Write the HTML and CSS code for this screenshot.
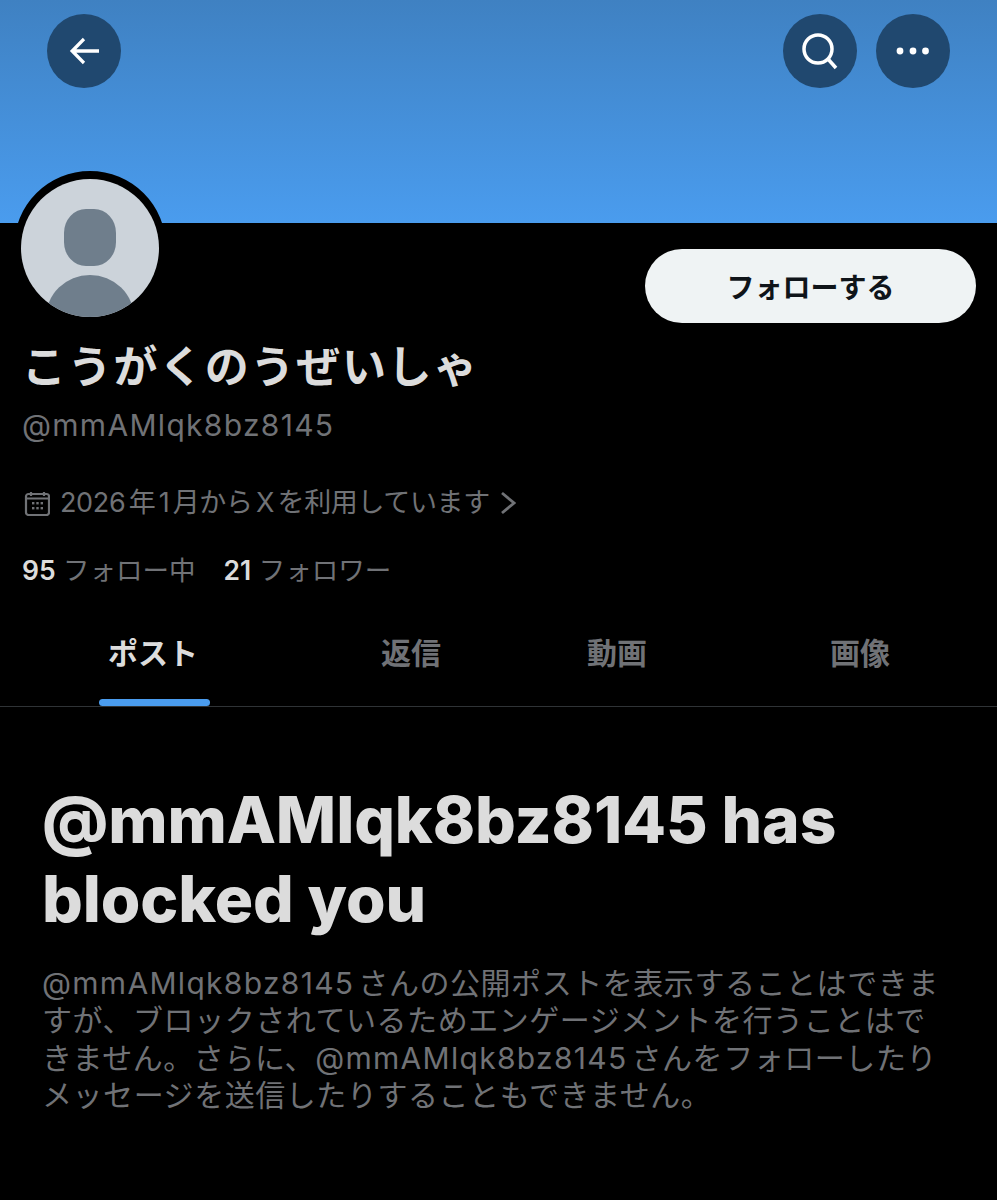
FILE: index.html
```html
<!DOCTYPE html>
<html lang="ja">
<head>
    <meta charset="UTF-8">
    <meta name="viewport" content="width=device-width, initial-scale=1.0">
    <title>@mmAMlqk8bz8145</title>
    <link rel="stylesheet" href="styles.css">
</head>
<body>

<div class="banner">
    <button class="round-btn">
        <svg width="36" height="36" viewBox="0 0 36 36"><path d="M33 18H4M17 6 4.5 18 17 30" transform="translate(2 0) scale(.94 1)"/></svg>
    </button>
    <div class="banner-right">
        <button class="round-btn">
            <svg width="40" height="40" viewBox="0 0 40 40"><circle cx="18" cy="18" r="14"/><path d="M28 28 36 37"/></svg>
        </button>
        <button class="round-btn">
            <svg class="dots" width="34" height="10" viewBox="0 0 34 10"><circle cx="4" cy="5" r="3.400"/><circle cx="17" cy="5" r="3.400"/><circle cx="29.500" cy="5" r="3.400"/></svg>
        </button>
    </div>
</div>

<div class="profile">
    <div class="avatar-row">
        <div class="avatar">
            <svg width="138" height="138" viewBox="0 0 138 138">
                <rect x="43" y="30" width="52" height="57" rx="22" ry="24"/>
                <ellipse cx="69" cy="139" rx="44" ry="43"/>
            </svg>
        </div>
        <button class="follow-btn">フォローする</button>
    </div>
    <h1 class="name">こうがくのうぜいしゃ</h1>
    <div class="handle">@mmAMlqk8bz8145</div>
    <div class="joined">
        <svg width="26" height="26" viewBox="0 0 26 26">
            <rect x="2" y="4" width="23" height="21" rx="2.500"/>
            <path d="M7 2v4M20 2v4M2 8.500h23"/>
            <g class="cal-dots"><rect x="8" y="12" width="2.400" height="2.400"/><rect x="12.300" y="12" width="2.400" height="2.400"/><rect x="16.600" y="12" width="2.400" height="2.400"/><rect x="8" y="17" width="2.400" height="2.400"/><rect x="12.300" y="17" width="2.400" height="2.400"/><rect x="16.600" y="17" width="2.400" height="2.400"/></g>
        </svg>
        <span>2026年1月からXを利用しています</span>
        <svg class="chev" width="16" height="24" viewBox="0 0 16 24"><path d="M2 2 14 12 2 22"/></svg>
    </div>
    <div class="counts">
        <span><b>95</b> フォロー中</span>
        <span><b>21</b> フォロワー</span>
    </div>
</div>

<div class="tabs">
    <div class="tab active">ポスト<i></i></div>
    <div class="tab">返信</div>
    <div class="tab">動画</div>
    <div class="tab">画像</div>
</div>

<div class="blocked">
    <h2>@mmAMlqk8bz8145 has blocked you</h2>
    <p><span class="at">@mmAMlqk8bz8145</span> さんの公開ポストを表示することはできま<br>すが、ブロックされているためエンゲージメントを行うことはで<br>きません。さらに、<span class="at">@mmAMlqk8bz8145</span> さんをフォローしたり<br>メッセージを送信したりすることもできません。</p>
</div>

</body>
</html>
```

FILE: styles.css
```css
* {
    box-sizing: border-box;
}

body {
    margin: 0;
    height: 1200px;
    overflow: hidden;
    background: #000;
    font-family: Inter, "Noto Sans CJK JP", sans-serif;
    color: #707276;
}

.banner {
    height: 223px;
    padding: 14px 47px;
    display: flex;
    justify-content: space-between;
    align-items: flex-start;
    background: linear-gradient(to bottom, #3f81c2, #4a9cee);
}

.banner-right {
    display: flex;
    gap: 19px;
}

.round-btn {
    width: 74px;
    height: 74px;
    padding: 0;
    border: none;
    border-radius: 50%;
    background: #20486f;
    display: flex;
    align-items: center;
    justify-content: center;
}

.round-btn svg {
    fill: none;
    stroke: #fff;
    stroke-width: 3.500;
}

.round-btn svg.dots {
    fill: #fff;
    stroke: none;
}

.profile {
    padding: 0 21px 0 22px;
}

.avatar-row {
    display: flex;
    justify-content: space-between;
    align-items: flex-start;
}

.avatar {
    width: 152px;
    height: 152px;
    margin: -52px 0 0 -8px;
    border: 7px solid #000;
    border-top-width: 8px;
    border-radius: 50%;
    background: #000;
    position: relative;
}

.avatar svg {
    display: block;
    border-radius: 50%;
    background: #ccd3da;
    fill: #6f7e8c;
}

.follow-btn {
    width: 331px;
    height: 74px;
    margin-top: 26px;
    padding-bottom: 2px;
    border: none;
    border-radius: 37px;
    background: #eff3f4;
    color: #0f1419;
    font-family: inherit;
    font-size: 28px;
    font-weight: 700;
}

.name {
    margin: 16px 0 0;
    color: #dcdcdc;
    font-size: 44px;
    line-height: 56px;
    letter-spacing: 1.700px;
    font-weight: 700;
}

.handle {
    margin-top: 11px;
    font-size: 30px;
    line-height: 38px;
    letter-spacing: 1.300px;
}

.joined {
    margin-top: 40px;
    display: flex;
    align-items: center;
    gap: 10px;
    padding-left: 2px;
    font-size: 27px;
    line-height: 38px;
    letter-spacing: -.35px;
    text-autospace: normal;
}

.joined svg {
    fill: none;
    stroke: #707276;
    stroke-width: 2.200;
}

.joined .chev {
    stroke-width: 2.800;
}

.joined .cal-dots {
    fill: #707276;
    stroke: none;
}

.counts {
    margin-top: 30px;
    display: flex;
    gap: 28px;
    font-size: 26.500px;
    line-height: 36px;
}

.counts b {
    color: #dcdcdc;
    font-weight: 600;
}

.tabs {
    margin-top: 29px;
    height: 90px;
    display: grid;
    grid-template-columns: 306px 210px 202px 284px;
    border-bottom: 1px solid #2f3336;
    font-size: 30px;
    font-weight: 700;
}

.tab {
    position: relative;
    text-align: center;
    line-height: 73px;
}

.tab.active {
    color: #dcdcdc;
}

.tab i {
    position: absolute;
    left: 99px;
    bottom: 0;
    width: 111px;
    height: 7px;
    border-radius: 4px;
    background: #4a9cee;
}

.blocked {
    padding: 73px 0 0 42px;
}

.blocked h2 {
    margin: 0;
    max-width: 830px;
    color: #dcdcdc;
    font-size: 64px;
    line-height: 79px;
    font-weight: 800;
    letter-spacing: -.1px;
}

.blocked p {
    margin: 27px 0 0;
    font-size: 30px;
    line-height: 37.330px;
    letter-spacing: .55px;
    word-spacing: -5px;
    white-space: nowrap;
}

.blocked .at {
    letter-spacing: 1.300px;
}
```
